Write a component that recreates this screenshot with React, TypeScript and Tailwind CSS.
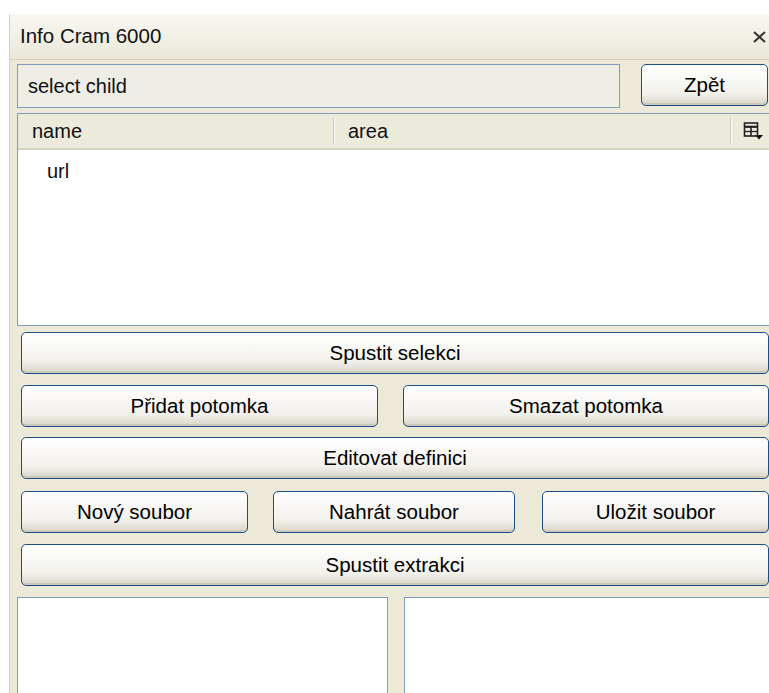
import { FC } from "react";

interface XpButtonProps {
  label: string;
  className?: string;
}

// classic XP style push button
const XpButton: FC<XpButtonProps> = ({ label, className }) => {
  return (
    <button
      className={`h-[42px] rounded-[5px] border border-[#1c4f86] bg-linear-to-b from-[#ffffff] via-[#f2f1ec] via-70% to-[#d9d4c7] text-[20.5px] leading-none text-black shadow-[inset_0_-2px_0_#cdc8ba] ${className ?? ""}`}
    >
      {label}
    </button>
  );
};

const ColumnPickerIcon = () => (
  <svg width="21" height="20" viewBox="0 0 21 20" fill="none">
    <rect x="1.5" y="2" width="13" height="13" stroke="#222" strokeWidth="1.6" />
    <line x1="1.5" y1="5.8" x2="14.5" y2="5.8" stroke="#222" strokeWidth="2.2" />
    <line x1="8" y1="6" x2="8" y2="15" stroke="#222" strokeWidth="1.6" />
    <line x1="1.5" y1="10.5" x2="14.5" y2="10.5" stroke="#222" strokeWidth="1.3" />
    <path d="M12 14 L20 14 L16 18.5 Z" fill="#111" />
  </svg>
);

const App: FC = () => {
  return (
    <div className="w-[769px] h-[693px] overflow-hidden bg-white pt-[14px] pl-[9px] font-['Liberation_Sans',Arial,sans-serif] text-[20px] text-[#111]">
      <div className="w-[771px] h-[700px] bg-[#ece9d8] border-l border-[#d4d0c2]">
        {/* title bar */}
        <div className="h-[46px] flex items-center justify-between pl-[10px] pr-[13px] bg-linear-to-b from-[#f9f8f3] to-[#eae7d9] border-b border-[#d3cfbf]">
          <span className="text-[20.5px]">Info Cram 6000</span>
          <svg width="15" height="14" viewBox="0 0 15 14">
            <line x1="2" y1="2" x2="13" y2="12" stroke="#333" strokeWidth="2" />
            <line x1="13" y1="2" x2="2" y2="12" stroke="#333" strokeWidth="2" />
          </svg>
        </div>

        <div className="px-[7px]">
          {/* selected node + back */}
          <div className="mt-[4px] flex items-start">
            <div className="w-[603px] h-[44px] border border-[#7f9db9] bg-[#eeede6] flex items-center pl-[10px]">
              select child
            </div>
            <XpButton label="Zpět" className="ml-[21px] w-[127px]" />
          </div>

          {/* child list */}
          <div className="mt-[5px] h-[213px] border border-[#7f9db9] bg-white flex flex-col">
            <div className="h-[36px] flex items-center bg-[#ebeadb] border-b-2 border-[#d6d2c3]">
              <span className="w-[315px] pl-[14px]">name</span>
              <span className="h-[26px] border-l border-[#cbc9b6] w-[2px] bg-white"></span>
              <span className="flex-1 pl-[13px]">area</span>
              <span className="h-[26px] border-l border-[#cbc9b6] w-[2px] bg-white"></span>
              <span className="w-[40px] pl-[11px] flex items-center">
                <ColumnPickerIcon />
              </span>
            </div>
            <div className="pl-[29px] pt-[6px]">url</div>
          </div>

          {/* actions */}
          <div className="px-[4px] flex flex-col">
            <XpButton label="Spustit selekci" className="mt-[6px] w-full" />
            <div className="mt-[11px] flex">
              <XpButton label="Přidat potomka" className="w-[357px]" />
              <XpButton label="Smazat potomka" className="ml-[25px] flex-1" />
            </div>
            <XpButton label="Editovat definici" className="mt-[10px] w-full" />
            <div className="mt-[12px] flex">
              <XpButton label="Nový soubor" className="w-[227px]" />
              <XpButton label="Nahrát soubor" className="ml-[25px] w-[242px]" />
              <XpButton label="Uložit soubor" className="ml-[27px] flex-1" />
            </div>
            <XpButton label="Spustit extrakci" className="mt-[11px] w-full" />
          </div>

          {/* output panes */}
          <div className="mt-[11px] flex">
            <div className="w-[371px] h-[110px] border border-[#7f9db9] bg-white"></div>
            <div className="ml-[16px] flex-1 h-[110px] border border-[#7f9db9] bg-white"></div>
          </div>
        </div>
      </div>
    </div>
  );
};

export default App;
